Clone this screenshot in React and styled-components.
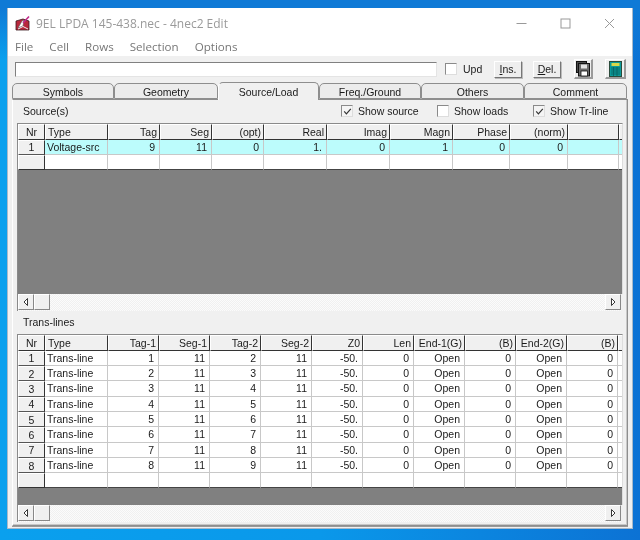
import React from 'react';
import styled, { createGlobalStyle } from 'styled-components';

const Global = createGlobalStyle`
  html, body { margin: 0; padding: 0; }
  body { font-family: "Liberation Sans", Arial, sans-serif; background: #0a94e6; }
  #root { width: 640px; height: 540px; overflow: hidden; }
`;

const Desktop = styled.div`
  width: 640px; height: 540px; box-sizing: border-box;
  padding: 8px 7px 11px 7px;
  background:
    linear-gradient(180deg, #0f7ad6 0, #0f7ad6 8px, rgba(15,122,214,0) 60px),
    linear-gradient(90deg, #0aa0ee 0, #0a98ea 50%, #0c72d4 100%);
  display: flex;
`;
const Win = styled.div`
  flex: 1; display: flex; flex-direction: column;
  background: #f0f0f0; border: 1px solid #a9b9c9; border-top: 0;
  box-sizing: border-box; min-width: 0;
  filter: blur(0.3px);
`;
const TitleBar = styled.div`
  height: 30px; background: #fff; display: flex; align-items: center; padding: 0 0 0 7px; gap: 5px;
`;
const TitleText = styled.span`
  font-family: "Open Sans", sans-serif; font-size: 12px; color: #9a9a9a; flex: 1;
`;
const WinBtns = styled.div`display:flex; align-items:center; padding-right: 17px; gap: 33px;`;
const MenuBar = styled.div`
  height: 17px; background:#fff; display:flex; align-items:center; padding-left: 7px; gap: 16px;
  font-family: "Open Sans", sans-serif; font-size: 11.6px; color:#777;
  padding-bottom: 1px;
`;
const Toolbar = styled.div`
  height: 26px; display:flex; align-items:center; padding: 0 0 0 7px; box-sizing:border-box;
`;
const TextInput = styled.div`
  width: 420px; height: 13px; background:#fff; border-top:1px solid #808080; border-left:1px solid #808080;
  border-right:1px solid #e4e4e4; border-bottom:1px solid #e4e4e4;
`;
const CheckBox = styled.span`
  width: 10px; height: 10px; background:#fff; border-top:1px solid #8a8a8a; border-left:1px solid #8a8a8a;
  border-right:1px solid #ddd; border-bottom:1px solid #ddd; display:inline-flex; align-items:center; justify-content:center; flex:none;
  background: ${p => p.$on ? '#f4f4f4' : '#fff'};
`;
const Lbl = styled.span`font-size: 10.5px; color:#1a1a1a; white-space:nowrap;`;
const UpdBox = styled.div`display:flex; align-items:center; gap: 6px; margin-left: 8px; width: 49px;`;
const SmallBtn = styled.div`
  width: 26px; height: 15px; background:#eee; font-size: 10.5px; color:#1a1a1a; display:flex; align-items:center; justify-content:center;
  border-top:1px solid #fff; border-left:1px solid #fff; border-right:1px solid #777; border-bottom:1px solid #777;
  margin-right: 11px; box-shadow: 1px 1px 0 #bbb;
  & u { text-decoration: underline; }
`;
const IconBtn = styled.div`
  width: ${p => p.$w}px; height: 20px; box-sizing:border-box; background:#eee; display:flex; align-items:center; justify-content:center;
  border-top:1px solid #fff; border-left:1px solid #fff; border-right:2px solid #9a9a9a; border-bottom:2px solid #9a9a9a;
  margin-left: ${p => p.$ml || 0}px;
  margin-right: ${p => p.$mr || 0}px;
`;
const TabStrip = styled.div`
  display:flex; padding-left: 4px; height: 17px; align-items:flex-end; position:relative; z-index:1;
`;
const Tab = styled.div`
  width: ${p => p.$w}px; box-sizing:border-box; height: ${p => p.$active ? 18 : 16}px;
  background: ${p => p.$active ? '#f0f0f0' : '#ececec'};
  border: 1px solid #8e8e8e; border-bottom: ${p => p.$active ? '0' : '1px solid #8e8e8e'};
  border-top-left-radius: 5px; border-top-right-radius: 5px;
  border-left-color: ${p => p.$active ? '#fff' : '#8e8e8e'};
  font-size: 10.5px; color:#1a1a1a; display:flex; align-items:center; justify-content:center;
  padding-top: ${p => p.$active ? 0 : 1}px;
  margin-bottom: ${p => p.$active ? -1 : 0}px;
`;
const Page = styled.div`
  flex: 1; margin: 0 4px 2px 4px; border: 1px solid #8e8e8e; border-left-color:#fff;
  box-shadow: inset -1px -1px 0 #c8c8c8, 0 1px 0 #999;
  padding: 0 3px 3px 4px; display:flex; flex-direction:column; box-sizing:border-box; min-height: 0;
`;
const SectionHead = styled.div`
  height: 23px; display:flex; align-items:center; font-size: 10.5px; color:#1a1a1a; padding-left: 6px;
`;
const HeadChecks = styled.div`
  display:flex; align-items:center; margin-left: auto; padding-right: 19px;
`;
const Check = styled.div`display:flex; align-items:center; gap: 5px; width: ${p => p.$w}px;`;
const GridFrame = styled.div`
  display:flex; flex-direction:column; height: ${p => p.$h}px; background:#808080;
  border-top:1px solid #8a8a8a; border-left:1px solid #8a8a8a; border-right:1px solid #ddd; overflow:hidden; flex:none;
  width: 604px;
`;
const Row = styled.div`
  display:grid; grid-template-columns: ${p => p.$cols}; height: ${p => p.$h || 15.35}px; flex:none;
  box-sizing:border-box;
`;
const HCell = styled.div`
  background:#f0f0f0; font-size: 10.5px; color:#1a1a1a; display:flex; align-items:center;
  justify-content:${p => p.$left ? 'flex-start' : p.$center ? 'center' : 'flex-end'};
  padding: 0 2px; overflow:hidden; white-space:nowrap;
  border-right: 1px solid #333; border-bottom: 1px solid #333; box-sizing:border-box;
  border-top:1px solid #fff; border-left:1px solid #fff;
`;
const NCell = styled(HCell)`
  justify-content:center; border-right: 1px solid #333; border-bottom: 1px solid ${p => p.$last ? '#333' : '#555'};
`;
const Cell = styled.div`
  background:${p => p.$sel ? '#bcfcfc' : '#fff'}; font-size: 10.5px; color:#1a1a1a; display:flex; align-items:center;
  justify-content:${p => p.$left ? 'flex-start' : 'flex-end'};
  padding: 0 4px 0 2px; overflow:hidden; white-space:nowrap; box-sizing:border-box;
  border-right: 1px solid #c8c8c8; border-bottom: 1px solid ${p => p.$bottom ? '#444' : '#c8c8c8'};
`;
const Gray = styled.div`flex: 1; background:#808080;`;
const Scroll = styled.div`
  height: 17px; width: 604px; flex:none; display:flex; justify-content:space-between;
  background-color:#f6f6f6;
  background-image: repeating-conic-gradient(#f0f0f0 0 25%, #fbfbfb 0 50%); background-size: 2px 2px;
  border-left:1px solid #8a8a8a; box-sizing:border-box;
`;
const ScrollBtn = styled.div`
  width: 16px; height: 16px; background:#f0f0f0; box-sizing:border-box; display:flex; align-items:center; justify-content:center;
  border-top:1px solid #fff; border-left:1px solid #fff; border-right:1px solid #888; border-bottom:1px solid #888;
`;
const ScrollLeftGroup = styled.div`display:flex;`;
const LowerHead = styled(SectionHead)`height: 24px;`;

const Tick = () => (
  <svg width="9" height="9" viewBox="0 0 9 9"><path d="M1.2 4.4 L3.4 6.8 L7.8 1.8" fill="none" stroke="#333" strokeWidth="1.2"/></svg>
);
const ArrowL = () => <svg width="6" height="8" viewBox="0 0 6 8"><path d="M4.5 0.5 L1 4 L4.5 7.5 Z" fill="#fff" stroke="#222" strokeWidth=".9"/></svg>;
const ArrowR = () => <svg width="6" height="8" viewBox="0 0 6 8"><path d="M1.5 0.5 L5 4 L1.5 7.5 Z" fill="#fff" stroke="#222" strokeWidth=".9"/></svg>;

const cols1 = '27px 63px 52px 52px 52px 63px 63px 63px 57px 58px 51px 2px';
const cols2 = '27px 63px 51px 51px 51px 51px 51px 51px 51px 51px 51px 51px 3px';

const hdr1 = ['Nr','Type','Tag','Seg','(opt)','Real','Imag','Magn','Phase','(norm)',''];
const row1 = ['Voltage-src','9','11','0','1.','0','1','0','0',''];
const hdr2 = ['Nr','Type','Tag-1','Seg-1','Tag-2','Seg-2','Z0','Len','End-1(G)','(B)','End-2(G)','(B)'];

const Grid1 = () => (
  <GridFrame $h={170}>
    <Row $cols={cols1} $h={16}>
      {hdr1.map((h,i) => <HCell key={i} $left={i===1} $center={i===0}>{h}</HCell>)}
      <HCell />
    </Row>
    <Row $cols={cols1} $h={15}>
      <NCell>1</NCell>
      {row1.map((c,i) => <Cell key={i} $sel $left={i===0}>{c}</Cell>)}
      <Cell $sel />
    </Row>
    <Row $cols={cols1} $h={15}>
      <NCell $last />
      {row1.map((c,i) => <Cell key={i} $bottom />)}
      <Cell $bottom />
    </Row>
    <Gray />
  </GridFrame>
);

const rows = [1,2,3,4,5,6,7,8];
const Grid2 = () => (
  <GridFrame $h={170}>
    <Row $cols={cols2} $h={15.5}>
      {hdr2.map((h,i) => <HCell key={i} $left={i===1} $center={i===0}>{h}</HCell>)}
      <HCell />
    </Row>
    {rows.map(n => (
      <Row key={n} $cols={cols2}>
        <NCell>{n}</NCell>
        <Cell $left>Trans-line</Cell>
        <Cell>{n}</Cell><Cell>11</Cell><Cell>{n+1}</Cell><Cell>11</Cell>
        <Cell>-50.</Cell><Cell>0</Cell><Cell>Open</Cell><Cell>0</Cell><Cell>Open</Cell><Cell>0</Cell>
        <Cell />
      </Row>
    ))}
    <Row $cols={cols2} $h={15}>
      <NCell $last />
      {hdr2.slice(1).map((_,i) => <Cell key={i} $bottom />)}
      <Cell $bottom />
    </Row>
    <Gray />
  </GridFrame>
);

const Bar = () => (
  <Scroll>
    <ScrollLeftGroup><ScrollBtn><ArrowL /></ScrollBtn><ScrollBtn /></ScrollLeftGroup>
    <ScrollBtn><ArrowR /></ScrollBtn>
  </Scroll>
);

export default function App() {
  return (
    <>
      <Global />
      <Desktop>
        <Win>
          <TitleBar>
            <svg width="16" height="16" viewBox="0 0 16 16">
              <path d="M1 6 L8 4 L14 6 V15 H1 Z" fill="#b8283c" stroke="#3a1a20" strokeWidth=".8"/>
              <path d="M3 13 L7 6 L9 5 L8 11 L3 13 Z" fill="#fff" stroke="#555" strokeWidth=".6"/>
              <path d="M8 8 L14 1.5" fill="none" stroke="#c02a8a" strokeWidth="1.6"/>
              <path d="M3 14 L8 11.5 L13 14" fill="none" stroke="#eee" strokeWidth="1"/>
            </svg>
            <TitleText>9EL LPDA 145-438.nec - 4nec2 Edit</TitleText>
            <WinBtns>
              <svg width="11" height="11" viewBox="0 0 11 11"><path d="M0.5 5.5 H10.5" stroke="#999" /></svg>
              <svg width="11" height="11" viewBox="0 0 11 11"><rect x="1" y="1" width="9" height="9" fill="none" stroke="#999"/></svg>
              <svg width="11" height="11" viewBox="0 0 11 11"><path d="M1 1 L10 10 M10 1 L1 10" stroke="#999"/></svg>
            </WinBtns>
          </TitleBar>
          <MenuBar>
            <span>File</span><span>Cell</span><span>Rows</span><span>Selection</span><span>Options</span>
          </MenuBar>
          <Toolbar>
            <TextInput />
            <UpdBox><CheckBox /><Lbl>Upd</Lbl></UpdBox>
            <SmallBtn><span><u>I</u>ns.</span></SmallBtn>
            <SmallBtn><span><u>D</u>el.</span></SmallBtn>
            <IconBtn $w={19} $ml={2} $mr={12}>
              <svg width="15" height="16" viewBox="0 0 15 16">
                <rect x="0.5" y="0.5" width="10" height="11" fill="#4a4a4a" stroke="#111"/>
                <rect x="2.5" y="2.5" width="11" height="12.5" fill="#6a6a6a" stroke="#111"/>
                <rect x="5" y="3.5" width="6" height="4" fill="#e2e2e2"/>
                <rect x="5" y="10" width="6.5" height="5" fill="#fff" stroke="#111" strokeWidth=".8"/>
              </svg>
            </IconBtn>
            <IconBtn $w={21}>
              <svg width="13" height="16" viewBox="0 0 13 16">
                <rect x="0.5" y="0.5" width="12" height="15" fill="#0c9a9a" stroke="#2a4a3a"/>
                <rect x="2.5" y="2" width="8" height="3" fill="#d8d84a"/>
                <path d="M2 7 H11 M2 9 H11 M2 11 H11 M2 13 H11 M4.5 6 V15 M8 6 V15" stroke="#075a5a" strokeWidth=".7"/>
              </svg>
            </IconBtn>
          </Toolbar>
          <TabStrip>
            <Tab $w={102}>Symbols</Tab>
            <Tab $w={104}>Geometry</Tab>
            <Tab $w={101} $active>Source/Load</Tab>
            <Tab $w={102}>Freq./Ground</Tab>
            <Tab $w={103}>Others</Tab>
            <Tab $w={103}>Comment</Tab>
          </TabStrip>
          <Page>
            <SectionHead>
              Source(s)
              <HeadChecks>
                <Check $w={96}><CheckBox $on><Tick /></CheckBox><Lbl>Show source</Lbl></Check>
                <Check $w={96}><CheckBox /><Lbl>Show loads</Lbl></Check>
                <Check $w={72}><CheckBox $on><Tick /></CheckBox><Lbl>Show Tr-line</Lbl></Check>
              </HeadChecks>
            </SectionHead>
            <Grid1 />
            <Bar />
            <LowerHead>Trans-lines</LowerHead>
            <Grid2 />
            <Bar />
          </Page>
        </Win>
      </Desktop>
    </>
  );
}
